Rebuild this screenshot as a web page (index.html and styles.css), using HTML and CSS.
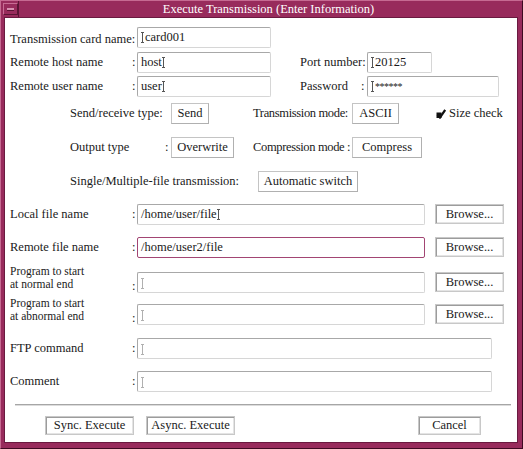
FILE: index.html
```html
<!DOCTYPE html>
<html>
<head>
<meta charset="utf-8">
<title>Execute Transmission</title>
<link rel="stylesheet" href="styles.css">
</head>
<body>
<div class="window">
  <div class="titlebar">
    <div class="menubtn"><span class="dash"></span></div>
    <div class="title">Execute Transmission (Enter Information)</div>
  </div>
  <div class="panel">
    <div class="row r1">
      <span class="lbl w127 lower">Transmission card name:</span>
      <span class="field w134"><i class="ibeam"></i>card001</span>
    </div>
    <div class="row r2">
      <span class="lbl w120">Remote host name</span><span class="colon w7">:</span>
      <span class="field w134">host<i class="ibeam"></i></span>
      <span class="lbl w67 ml29">Port number:</span>
      <span class="field w65"><i class="ibeam"></i>20125</span>
    </div>
    <div class="row r3">
      <span class="lbl w120">Remote user name</span><span class="colon w7">:</span>
      <span class="field w134">user<i class="ibeam"></i></span>
      <span class="lbl w59 ml29">Password</span><span class="colon w8">:</span>
      <span class="field w132"><i class="ibeam"></i><span class="stars">******</span></span>
    </div>
    <div class="row r4 indent">
      <span class="lbl w101">Send/receive type:</span>
      <span class="opt w38">Send</span>
      <span class="lbl w99 ml44 tight">Transmission mode:</span>
      <span class="opt w47">ASCII</span>
      <span class="check ml37">
        <svg width="10" height="10" viewBox="0 0 10 10"><rect x="0.5" y="3.5" width="5" height="5.5" fill="#111"/><path d="M1.5 5.5 L4 8.5 L9.2 1" fill="none" stroke="#111" stroke-width="2.2"/></svg>
        <span class="checklbl">Size check</span>
      </span>
    </div>
    <div class="row r5 indent">
      <span class="lbl w93">Output type</span><span class="colon w8">:</span>
      <span class="opt w63">Overwrite</span>
      <span class="lbl w99 ml19 tight">Compression mode :</span>
      <span class="opt w70">Compress</span>
    </div>
    <div class="row r6 indent">
      <span class="lbl w188">Single/Multiple-file transmission:</span>
      <span class="opt w100">Automatic switch</span>
    </div>
    <div class="row r7">
      <span class="lbl w120">Local file name</span><span class="colon w7">:</span>
      <span class="field w288">/home/user/file<i class="ibeam"></i></span>
      <span class="btn browse">Browse...</span>
    </div>
    <div class="row r8">
      <span class="lbl w120">Remote file name</span><span class="colon w7">:</span>
      <span class="field w288 focus">/home/user2/file</span>
      <span class="btn browse">Browse...</span>
    </div>
    <div class="row r9">
      <span class="lbl w120 two">Program to start<br>at normal end</span><span class="colon w7 low">:</span>
      <span class="field w288"><i class="ibeam dim"></i></span>
      <span class="btn browse">Browse...</span>
    </div>
    <div class="row r10">
      <span class="lbl w120 two">Program to start<br>at abnormal end</span><span class="colon w7 low">:</span>
      <span class="field w288"><i class="ibeam dim"></i></span>
      <span class="btn browse">Browse...</span>
    </div>
    <div class="row r11">
      <span class="lbl w120">FTP command</span><span class="colon w7">:</span>
      <span class="field w355"><i class="ibeam dim"></i></span>
    </div>
    <div class="row r12">
      <span class="lbl w120">Comment</span><span class="colon w7">:</span>
      <span class="field w355"><i class="ibeam dim"></i></span>
    </div>
    <div class="separator"></div>
    <div class="actions">
      <span class="btn act w89">Sync. Execute</span>
      <span class="btn act w89 ml12">Async. Execute</span>
      <span class="btn act w63 cancel">Cancel</span>
    </div>
  </div>
</div>
</body>
</html>
```

FILE: styles.css
```css
html, body {
  margin: 0;
  padding: 0;
  background: #ffffff;
}

body {
  font-family: "Liberation Serif", "Times New Roman", serif;
  font-size: 12.5px;
  color: #1a1a1a;
}

.window {
  box-sizing: border-box;
  width: 523px;
  height: 449px;
  background: #982b5c;
  border-top: 1px solid #c66a92;
  border-left: 1px solid #c66a92;
  border-right: 1px solid #3e0a22;
  border-bottom: 1px solid #3e0a22;
  display: flex;
  flex-direction: column;
}

.titlebar {
  height: 16px;
  display: flex;
  align-items: center;
}

.menubtn {
  box-sizing: border-box;
  width: 15px;
  height: 12px;
  margin-left: 2px;
  border-top: 1px solid #c86c94;
  border-left: 1px solid #c86c94;
  border-right: 1px solid #5a1434;
  border-bottom: 1px solid #5a1434;
  display: flex;
  align-items: center;
  justify-content: center;
}

.dash {
  display: block;
  width: 7px;
  height: 2px;
  background: #d690b0;
  border-bottom: 1px solid #5a1434;
}

.title {
  flex: 1;
  text-align: center;
  color: #ffffff;
  line-height: 16px;
  padding-right: 4px;
  border-left: 1px solid #5a1434;
  height: 16px;
}

.panel {
  flex: 1;
  margin: 0 4px 5px 3px;
  background: #ffffff;
  border: 1px solid #6a1a40;
  padding-left: 5px;
  box-sizing: border-box;
}

.row {
  display: flex;
  align-items: center;
  height: 21px;
  white-space: nowrap;
}

.indent { padding-left: 60px; }

.r1 { margin-top: 9px; }
.r2 { margin-top: 4px; }
.r3 { margin-top: 3px; }
.r4 { margin-top: 6px; }
.r5 { margin-top: 13px; }
.r6 { margin-top: 13px; }
.r7 { margin-top: 12px; }
.r8 { margin-top: 12px; }
.r9 { margin-top: 14px; }
.r10 { margin-top: 11px; }
.r11 { margin-top: 13px; }
.r12 { margin-top: 12px; }

.lbl {
  display: block;
  flex: none;
  overflow: visible;
}

.tight { letter-spacing: -0.35px; }

.lower { padding-top: 4px; }

.two {
  font-size: 11.5px;
  line-height: 13px;
  align-self: flex-start;
  margin-top: -7px;
}

.colon {
  display: block;
  flex: none;
  padding-left: 2px;
  box-sizing: border-box;
}

.colon.low {
  align-self: flex-end;
  line-height: 14px;
}

.w7 { width: 7px; }
.w8 { width: 8px; }
.w38 { width: 38px; }
.w47 { width: 47px; }
.w59 { width: 59px; }
.w63 { width: 63px; }
.w65 { width: 65px; }
.w67 { width: 67px; }
.w70 { width: 70px; }
.w89 { width: 89px; }
.w93 { width: 93px; }
.w99 { width: 99px; }
.w100 { width: 100px; }
.w101 { width: 101px; }
.w120 { width: 120px; }
.w127 { width: 127px; }
.w132 { width: 132px; }
.w134 { width: 134px; }
.w188 { width: 188px; }
.w288 { width: 288px; }
.w355 { width: 355px; }

.ml12 { margin-left: 12px; }
.ml19 { margin-left: 19px; }
.ml29 { margin-left: 29px; }
.ml37 { margin-left: 37px; }
.ml44 { margin-left: 44px; }

.field {
  display: block;
  flex: none;
  box-sizing: border-box;
  height: 21px;
  line-height: 18px;
  padding-left: 3px;
  border: 1px solid;
  border-color: #a8a8a8 #d6d6d6 #d6d6d6 #a8a8a8;
  border-radius: 2px;
  background: #ffffff;
  overflow: hidden;
}

.field.focus {
  border-color: #a24573;
}

.ibeam {
  display: inline-block;
  box-sizing: border-box;
  width: 3px;
  height: 11px;
  margin: 0 1px 0 0;
  vertical-align: -2px;
  border-top: 1px solid #555;
  border-bottom: 1px solid #555;
  background: linear-gradient(#555, #555) center / 1px 100% no-repeat;
}

.ibeam.dim {
  border-color: #b0b0b0;
  background: linear-gradient(#b0b0b0, #b0b0b0) center / 1px 100% no-repeat;
  vertical-align: -3px;
}

.stars {
  font-size: 10px;
  letter-spacing: -0.5px;
}

.opt {
  display: block;
  flex: none;
  box-sizing: border-box;
  height: 21px;
  line-height: 19px;
  text-align: center;
  border: 1px solid;
  border-color: #c4c4c4 #b0b0b0 #b0b0b0 #c4c4c4;
  background: #ffffff;
}

.check {
  display: flex;
  align-items: center;
  gap: 3px;
}

.btn {
  display: block;
  flex: none;
  box-sizing: border-box;
  text-align: center;
  border: 1px solid #c8c8c8;
  box-shadow: inset 1px 1px 0 #9c9c9c, inset -1px -1px 0 #e4e4e4;
  background: #ffffff;
}

.browse {
  width: 69px;
  height: 20px;
  line-height: 18px;
  margin-left: 10px;
  align-self: flex-start;
}

.separator {
  margin: 12px 6px 0 5px;
  height: 0;
  border-top: 1px solid #a6a6a6;
  border-bottom: 1px solid #dcdcdc;
}

.actions {
  display: flex;
  margin-top: 10px;
  padding-left: 35px;
}

.act {
  height: 19px;
  line-height: 17px;
}

.cancel {
  margin-left: 183px;
}
```
